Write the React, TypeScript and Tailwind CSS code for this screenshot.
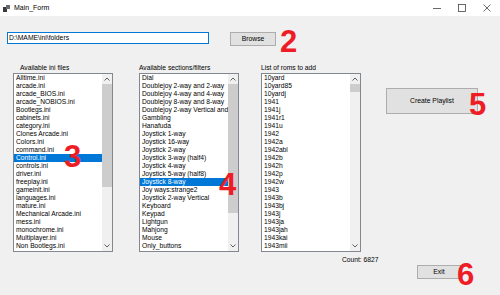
import React from 'react';

const iniFiles = [
  'Alltime.ini', 'arcade.ini', 'arcade_BIOS.ini', 'arcade_NOBIOS.ini', 'Bootlegs.ini', 'cabinets.ini',
  'category.ini', 'Clones Arcade.ini', 'Colors.ini', 'command.ini', 'Control.ini', 'controls.ini',
  'driver.ini', 'freeplay.ini', 'gameinit.ini', 'languages.ini', 'mature.ini', 'Mechanical Arcade.ini',
  'mess.ini', 'monochrome.ini', 'Multiplayer.ini', 'Non Bootlegs.ini',
];

const sections = [
  'Dial', 'Doublejoy 2-way and 2-way', 'Doublejoy 4-way and 4-way', 'Doublejoy 8-way and 8-way',
  'Doublejoy 2-way Vertical and 2', 'Gambling', 'Hanafuda', 'Joystick 1-way', 'Joystick 16-way',
  'Joystick 2-way', 'Joystick 3-way (half4)', 'Joystick 4-way', 'Joystick 5-way (half8)', 'Joystick 8-way',
  'Joy ways:strange2', 'Joystick 2-way Vertical', 'Keyboard', 'Keypad', 'Lightgun', 'Mahjong', 'Mouse',
  'Only_buttons',
];

const roms = [
  '10yard', '10yard85', '10yardj', '1941', '1941j', '1941r1', '1941u', '1942', '1942a', '1942abl', '1942b',
  '1942h', '1942p', '1942w', '1943', '1943b', '1943bj', '1943j', '1943ja', '1943jah', '1943kai', '1943mii',
];

const Chevron = ({ down }: { down?: boolean }) => (
  <svg width="6" height="4" viewBox="0 0 6 4" className={down ? 'rotate-180' : ''}>
    <path d="M0.5 3.5 L3 1 L5.5 3.5" fill="none" stroke="#606060" strokeWidth="1" />
  </svg>
);

const ListBox = ({
  items,
  selected,
  thumbHeight,
}: {
  items: string[];
  selected?: number;
  thumbHeight: number;
}) => (
  <div className="flex w-[100px] h-[179px] border border-[#828790] bg-white">
    <div className="flex-1 min-w-0 overflow-hidden">
      {items.map((item, i) => (
        <div
          key={item}
          className={`h-[8px] leading-[8px] pl-[2px] whitespace-nowrap overflow-hidden ${
            i === selected ? 'bg-[#0078d7] text-white' : 'text-black'
          }`}
        >
          {item}
        </div>
      ))}
    </div>
    <div className="w-[10px] bg-[#f0f0f0] flex flex-col">
      <div className="h-[10px] flex items-center justify-center">
        <Chevron />
      </div>
      <div className="flex-1">
        <div className="bg-[#cdcdcd]" style={{ height: thumbHeight }} />
      </div>
      <div className="h-[10px] flex items-center justify-center">
        <Chevron down />
      </div>
    </div>
  </div>
);

const Num = ({ n, className }: { n: string; className: string }) => (
  <span
    className={`absolute text-[31px] leading-none font-bold text-[#ee1c25] ${className}`}
    style={{ fontFamily: '"Liberation Sans", Arial, sans-serif' }}
  >
    {n}
  </span>
);

export default function App() {
  return (
    <div
      className="relative w-[500px] h-[295px] bg-[#f0f0f0] text-[6.7px] text-black overflow-hidden"
      style={{ fontFamily: '"Liberation Sans", Arial, sans-serif' }}
    >
      {/* title bar */}
      <div className="h-[16px] bg-white flex items-center">
        <svg width="7" height="7" viewBox="0 0 7 7" className="ml-[3px]">
          <rect x="0" y="2" width="4" height="5" fill="#3a3a3a" />
          <rect x="3" y="0" width="4" height="4" fill="#6a6a6a" />
        </svg>
        <span className="ml-[4px] text-[7px]">Main_Form</span>
        <div className="ml-auto flex items-center gap-[17px] mr-[9px]">
          <svg width="8" height="8" viewBox="0 0 8 8">
            <path d="M0 4.5 H8" stroke="#444" strokeWidth="0.8" />
          </svg>
          <svg width="8" height="8" viewBox="0 0 8 8">
            <rect x="0.5" y="0.5" width="7" height="7" fill="none" stroke="#444" strokeWidth="0.8" />
          </svg>
          <svg width="8" height="8" viewBox="0 0 8 8">
            <path d="M0.5 0.5 L7.5 7.5 M7.5 0.5 L0.5 7.5" stroke="#444" strokeWidth="0.8" />
          </svg>
        </div>
      </div>

      {/* path row */}
      <div className="flex items-start mt-[16px] pl-[7px]">
        <div className="w-[202px] h-[12px] border border-[#0078d7] bg-white pl-[1px] leading-[10px] text-[6.8px]">
          D:\MAME\ini\folders
        </div>
        <button className="ml-[21px] w-[46px] h-[14px] border border-[#adadad] bg-[#e1e1e1] text-[6.8px] leading-[12px]">
          Browse
        </button>
      </div>

      {/* lists */}
      <div className="flex mt-[16px]">
        <div className="ml-[13px] w-[100px]">
          <div className="h-[11px] leading-[11px] pl-[7px]">Available ini files</div>
          <ListBox items={iniFiles} selected={10} thumbHeight={103} />
        </div>
        <div className="ml-[26px] w-[100px]">
          <div className="h-[11px] leading-[11px]">Available sections/filters</div>
          <ListBox items={sections} selected={13} thumbHeight={129} />
        </div>
        <div className="ml-[22px] w-[100px]">
          <div className="h-[11px] leading-[11px]">List of roms to add</div>
          <ListBox items={roms} thumbHeight={8} />
        </div>
        <div className="ml-[25px] pt-[26px]">
          <button className="w-[92px] h-[26px] border border-[#adadad] bg-[#e1e1e1] text-[6.8px]">
            Create Playlist
          </button>
        </div>
      </div>

      {/* count */}
      <div className="ml-[342px] mt-[3px] h-[9px] leading-[9px]">Count: 6827</div>

      {/* exit */}
      <div className="mt-[1px] ml-[417px]">
        <button className="w-[44px] h-[14px] border border-[#adadad] bg-[#e1e1e1] text-[6.8px] leading-[12px]">
          Exit
        </button>
      </div>

      <Num n="2" className="left-[280px] top-[26px]" />
      <Num n="3" className="left-[64px] top-[141px]" />
      <Num n="4" className="left-[219px] top-[169px]" />
      <Num n="5" className="left-[469px] top-[89px]" />
      <Num n="6" className="left-[457px] top-[259px]" />
    </div>
  );
}
